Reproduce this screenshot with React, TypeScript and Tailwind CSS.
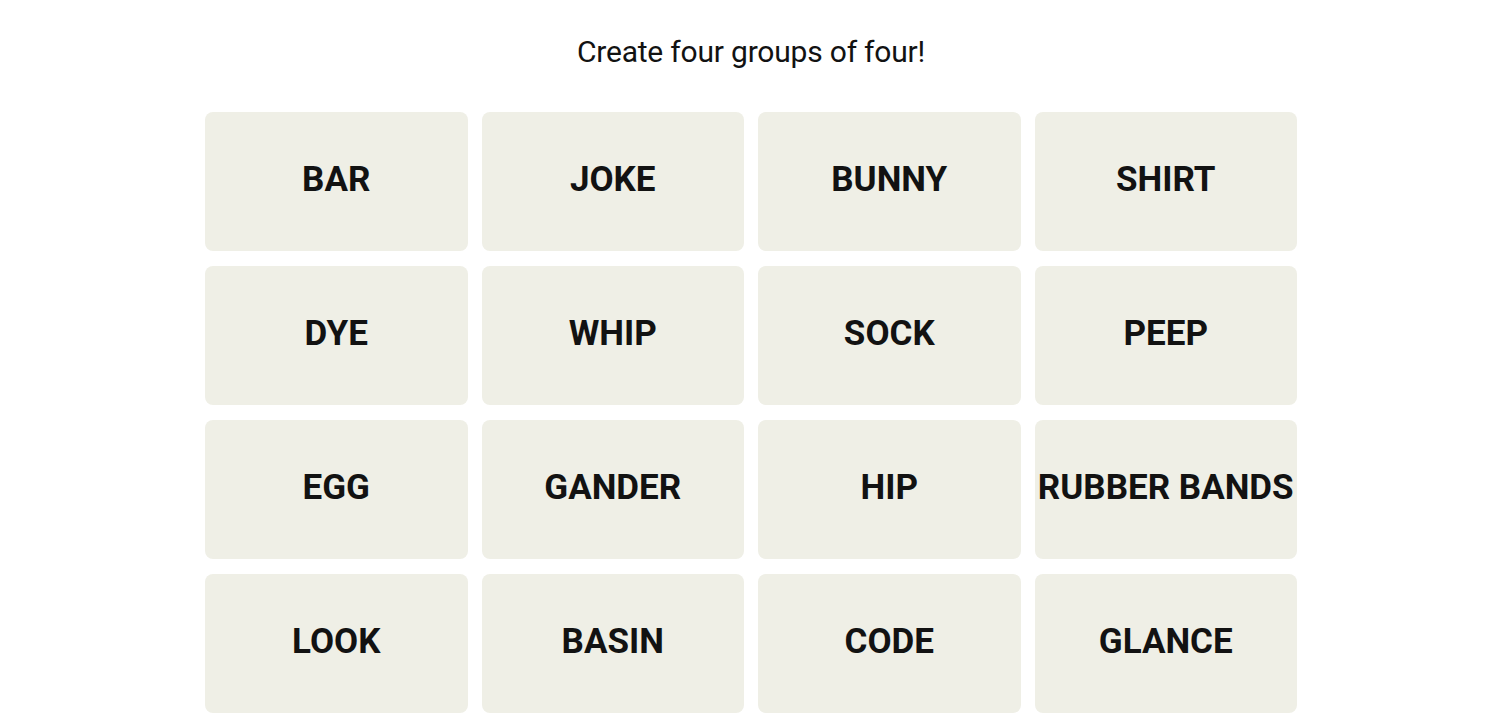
const words = [
  "BAR",
  "JOKE",
  "BUNNY",
  "SHIRT",
  "DYE",
  "WHIP",
  "SOCK",
  "PEEP",
  "EGG",
  "GANDER",
  "HIP",
  "RUBBER BANDS",
  "LOOK",
  "BASIN",
  "CODE",
  "GLANCE",
];

export default function App() {
  return (
    <main className="min-h-screen bg-white font-['Roboto',_sans-serif] text-[#121212]">
      <div className="mx-auto flex w-[1094px] flex-col items-center pt-[34px] pl-[2px]">
        <h1 className="text-[30px] leading-9 font-normal tracking-[-0.2px]">
          Create four groups of four!
        </h1>
        <div className="mt-[42px] grid w-full grid-cols-4 gap-x-[14px] gap-y-[15px]">
          {words.map((word) => (
            <button
              key={word}
              type="button"
              className="flex h-[139px] items-center justify-center rounded-lg bg-[#efefe6] pb-0.5 text-[35px] font-bold whitespace-nowrap"
            >
              {word}
            </button>
          ))}
        </div>
      </div>
    </main>
  );
}
